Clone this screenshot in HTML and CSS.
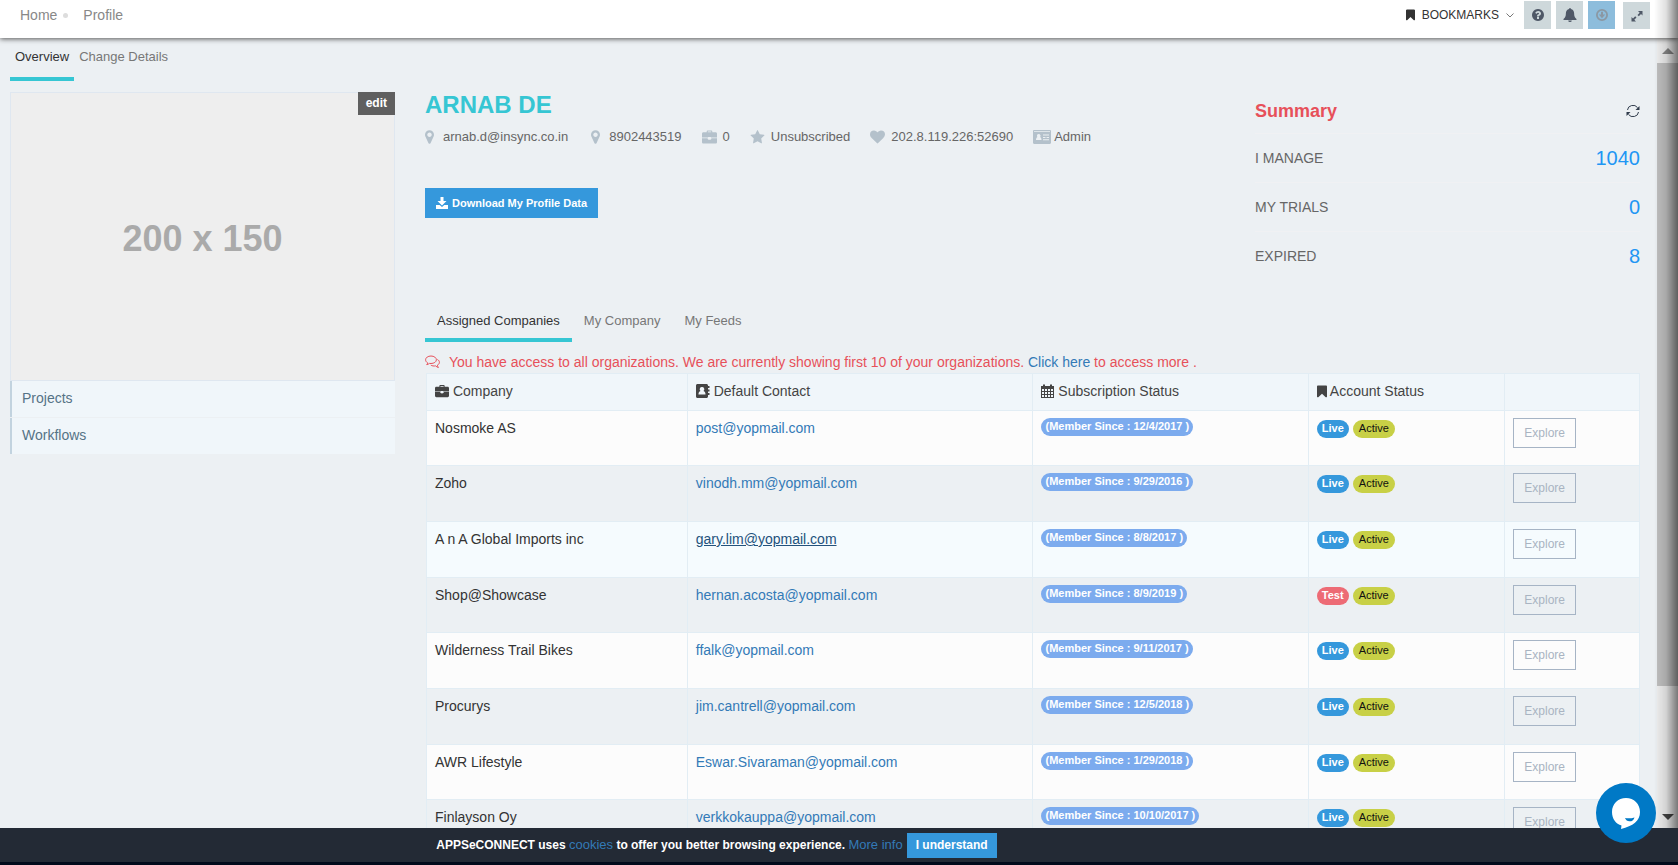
FILE: index.html
```html
<!DOCTYPE html>
<html lang="en">
<head>
<meta charset="utf-8">
<title>Profile</title>
<link rel="stylesheet" href="styles.css">
</head>
<body>
<svg class="sprite" aria-hidden="true">
  <symbol id="bookmark" viewBox="256 128 1280 1536"><path d="M1420 128q23 0 44 9 33 13 52.500 41t19.500 62v1289q0 34-19.500 62t-52.500 41q-19 8-44 8-48 0-83-32l-441-424-441 424q-36 33-83 33-23 0-44-9-33-13-52.500-41t-19.500-62v-1289q0-34 19.500-62t52.500-41q21-9 44-9h1048z"/></symbol>
  <symbol id="marker" viewBox="384 128 1024 1536"><path d="M1152 640q0-106-75-181t-181-75-181 75-75 181 75 181 181 75 181-75 75-181zm256 0q0 109-33 179l-364 774q-16 33-47.500 52t-67.500 19-67.500-19-46.500-52l-365-774q-33-70-33-179 0-212 150-362t362-150 362 150 150 362z"/></symbol>
  <symbol id="star" viewBox="0 64 1792 1600"><path d="M1728 647q0 22-26 48l-363 354 86 500q1 7 1 20 0 21-10.500 35.500t-30.500 14.500q-19 0-40-12l-449-236-449 236q-22 12-40 12-21 0-31.500-14.500t-10.500-35.500q0-6 2-20l86-500-364-354q-25-27-25-48 0-37 56-46l502-73 225-455q19-41 49-41t49 41l225 455 502 73q56 9 56 46z"/></symbol>
  <symbol id="heart" viewBox="0 128 1792 1536"><path d="M896 1664q-26 0-44-18l-624-602q-10-8-27.500-26t-55.500-65.500-68-97.500-53.500-121-23.500-138q0-220 127-344t351-124q62 0 126.500 21.500t120 58 95.500 68.500 76 68q36-36 76-68t95.500-68.500 120-58 126.500-21.500q224 0 351 124t127 344q0 221-229 450l-623 600q-18 18-44 18z"/></symbol>
  <symbol id="question" viewBox="128 128 1536 1536"><path d="M1024 1376v-192q0-14-9-23t-23-9h-192q-14 0-23 9t-9 23v192q0 14 9 23t23 9h192q14 0 23-9t9-23zm256-672q0-88-55.500-163t-138.500-116-170-41q-243 0-371 213-15 24 8 42l132 100q7 6 19 6 16 0 25-12 53-68 86-92 34-24 86-24 48 0 85.500 26t37.500 59q0 38-20 61t-68 45q-63 28-115.500 86.500t-52.500 125.500v36q0 14 9 23t23 9h192q14 0 23-9t9-23q0-19 21.500-49.500t54.500-49.500q32-18 49-28.500t46-35 44.500-48 28-60.500 12.500-81zm384 192q0 209-103 385.500t-279.500 279.500-385.500 103-385.500-103-279.500-279.500-103-385.500 103-385.500 279.500-279.500 385.500-103 385.500 103 279.500 279.500 103 385.500z"/></symbol>
  <symbol id="bell" viewBox="0 0 14 14"><path d="M7 0c.6 0 .9.400.9.900 2 .4 3.200 2 3.200 4.100 0 3.300.8 4.900 2.400 6.100.3.300.1.900-.4.900H.9c-.5 0-.7-.6-.4-.9C2.100 9.900 2.900 8.300 2.900 5c0-2.100 1.200-3.700 3.200-4.100C6.100.4 6.400 0 7 0zM5.200 12.500h3.600a1.800 1.500 0 0 1-3.600 0z"/></symbol>
  <symbol id="down" viewBox="1 1 12 12"><path fill-rule="evenodd" d="M7 1a6 6 0 1 0 0 12A6 6 0 0 0 7 1zm0 1.800a4.200 4.200 0 1 1 0 8.400 4.200 4.200 0 0 1 0-8.400zM6 3.800v2.700H3.800L7 10.200l3.200-3.700H8V3.800z"/></symbol>
  <symbol id="expand" viewBox="0 0 12 12"><path d="M7 1h4.500v4.500L10 4 7.800 6.200 6.500 5l2.200-2.300zM5 11.500H.5V7L2 8.500l2.200-2.200L5.500 7.500 3.300 9.800z"/></symbol>
  <symbol id="case" viewBox="0 0 16 14"><path fill-rule="evenodd" d="M5 2V1c0-.6.400-1 1-1h4c.6 0 1 .4 1 1v1h3.500c.8 0 1.500.7 1.500 1.500V7.600H9.500V7h-3v.6H0V3.500C0 2.700.7 2 1.500 2zm1.200 0h3.600v-.8H6.200zM0 8.200h6v.3c0 .8.700 1.300 2 1.300s2-.5 2-1.300v-.3h6v4.300c0 .8-.7 1.500-1.500 1.500h-13C.7 14 0 13.300 0 12.500z"/></symbol>
  <symbol id="idcard" viewBox="0 0 18 14"><path fill-rule="evenodd" d="M1.200 0h15.600c.7 0 1.200.5 1.200 1.200v11.600c0 .7-.5 1.200-1.200 1.200H1.200C.5 14 0 13.500 0 12.800V1.200C0 .5.500 0 1.200 0zM1 1.200v.9h16v-.9zM5.700 4a1.800 1.800 0 0 0-1.300 3C3.400 7.500 3 8.500 3 10h5.500c0-1.500-.5-2.500-1.400-3A1.800 1.800 0 0 0 5.700 4zM10 4.500v.9h6v-.9zM10 7v.9h2.500V7zm3.500 0v.9H16V7zM10 9.300v.9h6v-.9z"/></symbol>
  <symbol id="download" viewBox="0 0 12 12"><path d="M4.500 0h3v4h3L6 8.500 1.500 4h3zM0 8h3.700L6 10l2.300-2H12v4H0z"/></symbol>
  <symbol id="book" viewBox="0 0 14 14"><path fill-rule="evenodd" d="M1.500 0h9c.8 0 1.500.7 1.500 1.500V2h1.500v2H12v1.500h1.500v2H12V9h1.500v2H12v1.500c0 .8-.7 1.500-1.500 1.500h-9C.7 14 0 13.300 0 12.500v-11C0 .7.700 0 1.500 0zM6 3a2.200 2.200 0 0 0-1.500 3.900C3 7.300 2.500 8.500 2.500 10.500h7c0-2-.6-3.200-2-3.600A2.200 2.200 0 0 0 6 3z"/></symbol>
  <symbol id="calendar" viewBox="0 0 13 14"><path fill-rule="evenodd" d="M0 2h2V.5h2V2h5V.5h2V2h2v12H0zM1 5v2h2V5zm3 0v2h2V5zm3 0v2h2V5zm3 0v2h2V5zM1 8v2h2V8zm3 0v2h2V8zm3 0v2h2V8zm3 0v2h2V8zM1 11v2h2v-2zm3 0v2h2v-2zm3 0v2h2v-2zm3 0v2h2v-2z"/></symbol>
  <symbol id="chat" viewBox="0 0 15 14"><g fill="none" stroke="currentColor" stroke-linejoin="round"><path d="M6 1C3 1 .6 2.600.6 4.800c0 1.300.8 2.400 2.100 3.100-.1.700-.5 1.200-1 1.700 1-.1 2-.6 2.800-1.200.5.100 1 .1 1.500.1 3 0 5.400-1.600 5.400-3.700S9 1 6 1z"/><path d="M12.400 4.500c1.200.6 2 1.600 2 2.800s-.8 2.200-2 2.900c.2.900.5 1.600 1 2.300-1-.2-2-.8-2.700-1.600-2 .3-3.700 0-4.900-.8"/></g></symbol>
  <symbol id="refresh" viewBox="0 0 14 13"><path fill="none" stroke="currentColor" d="M1.500 5.500A5.500 5 0 0 1 11.500 3M12.500 7.500A5.500 5 0 0 1 2.500 10"/><path d="M13.500 1.500v4h-4zM.5 11.500v-4h4z"/></symbol>
</svg>

<header class="topbar">
  <nav class="crumbs" aria-label="Breadcrumb">
    <a href="#">Home</a><span class="dot"></span><a href="#">Profile</a>
  </nav>
  <div class="tools">
    <button class="bookmarks" type="button">
      <svg class="icon bm"><use href="#bookmark"/></svg>BOOKMARKS
      <svg class="chevron" viewBox="0 0 8 5"><path d="M.5.5 4 4 7.500.5"/></svg>
    </button>
    <button class="tool" type="button" aria-label="Help"><svg class="icon s12"><use href="#question"/></svg></button>
    <button class="tool" type="button" aria-label="Notifications"><svg class="icon s14"><use href="#bell"/></svg></button>
    <button class="tool blue" type="button" aria-label="Downloads"><svg class="icon s12"><use href="#down"/></svg></button>
    <button class="tool last" type="button" aria-label="Full screen"><svg class="icon s12"><use href="#expand"/></svg></button>
  </div>
</header>

<div class="body">
  <main class="content">
    <nav class="tabs page-tabs"><a class="on" href="#">Overview</a><a href="#">Change Details</a></nav>
    <div class="columns">
      <aside>
        <div class="photo"><span>200 x 150</span><button type="button">edit</button></div>
        <ul class="side">
          <li><a href="#">Projects</a></li>
          <li><a href="#">Workflows</a></li>
        </ul>
      </aside>
      <div>
        <div class="top">
          <section>
            <h1>ARNAB DE</h1>
            <ul class="facts">
              <li class="wide"><svg class="icon mk"><use href="#marker"/></svg>arnab.d@insync.co.in</li>
              <li class="wide"><svg class="icon mk"><use href="#marker"/></svg>8902443519</li>
              <li><svg class="icon s15"><use href="#case"/></svg>0</li>
              <li><svg class="icon s15"><use href="#star"/></svg>Unsubscribed</li>
              <li><svg class="icon s15"><use href="#heart"/></svg>202.8.119.226:52690</li>
              <li class="card"><svg class="icon s18"><use href="#idcard"/></svg>Admin</li>
            </ul>
            <button class="download" type="button"><svg class="icon s12"><use href="#download"/></svg>Download My Profile Data</button>
          </section>
          <section class="summary">
            <header><h2>Summary</h2><button type="button" aria-label="Refresh"><svg class="icon s14"><use href="#refresh"/></svg></button></header>
            <dl>
              <div><dt>I MANAGE</dt><dd>1040</dd></div>
              <div><dt>MY TRIALS</dt><dd>0</dd></div>
              <div><dt>EXPIRED</dt><dd>8</dd></div>
            </dl>
          </section>
        </div>
        <nav class="tabs list-tabs"><a class="on" href="#">Assigned Companies</a><a href="#">My Company</a><a href="#">My Feeds</a></nav>
        <p class="notice"><svg class="icon s15"><use href="#chat"/></svg><span>You have access to all organizations. We are currently showing first 10 of your organizations. <a href="#">Click here</a> to access more .</span></p>
        <div class="list">
        <table>
          <colgroup><col class="c1"><col class="c2"><col class="c3"><col class="c4"><col></colgroup>
          <thead>
            <tr>
              <th><svg class="icon s14"><use href="#case"/></svg> Company</th>
              <th><svg class="icon s14"><use href="#book"/></svg> Default Contact</th>
              <th><svg class="icon s14 cal"><use href="#calendar"/></svg> Subscription Status</th>
              <th><svg class="icon bm"><use href="#bookmark"/></svg>Account Status</th>
              <th></th>
            </tr>
          </thead>
          <tbody>
            <tr><td>Nosmoke AS</td><td><a href="#">post@yopmail.com</a></td><td><span class="badge since">(Member Since : 12/4/2017 )</span></td><td class="st"><span class="badge live">Live</span><span class="badge active">Active</span></td><td><button type="button">Explore</button></td></tr>
            <tr><td>Zoho</td><td><a href="#">vinodh.mm@yopmail.com</a></td><td><span class="badge since">(Member Since : 9/29/2016 )</span></td><td class="st"><span class="badge live">Live</span><span class="badge active">Active</span></td><td><button type="button">Explore</button></td></tr>
            <tr class="hover"><td>A n A Global Imports inc</td><td><a href="#">gary.lim@yopmail.com</a></td><td><span class="badge since">(Member Since : 8/8/2017 )</span></td><td class="st"><span class="badge live">Live</span><span class="badge active">Active</span></td><td><button type="button">Explore</button></td></tr>
            <tr><td>Shop@Showcase</td><td><a href="#">hernan.acosta@yopmail.com</a></td><td><span class="badge since">(Member Since : 8/9/2019 )</span></td><td class="st"><span class="badge test">Test</span><span class="badge active">Active</span></td><td><button type="button">Explore</button></td></tr>
            <tr><td>Wilderness Trail Bikes</td><td><a href="#">ffalk@yopmail.com</a></td><td><span class="badge since">(Member Since : 9/11/2017 )</span></td><td class="st"><span class="badge live">Live</span><span class="badge active">Active</span></td><td><button type="button">Explore</button></td></tr>
            <tr><td>Procurys</td><td><a href="#">jim.cantrell@yopmail.com</a></td><td><span class="badge since">(Member Since : 12/5/2018 )</span></td><td class="st"><span class="badge live">Live</span><span class="badge active">Active</span></td><td><button type="button">Explore</button></td></tr>
            <tr><td>AWR Lifestyle</td><td><a href="#">Eswar.Sivaraman@yopmail.com</a></td><td><span class="badge since">(Member Since : 1/29/2018 )</span></td><td class="st"><span class="badge live">Live</span><span class="badge active">Active</span></td><td><button type="button">Explore</button></td></tr>
            <tr><td>Finlayson Oy</td><td><a href="#">verkkokauppa@yopmail.com</a></td><td><span class="badge since">(Member Since : 10/10/2017 )</span></td><td class="st"><span class="badge live">Live</span><span class="badge active">Active</span></td><td><button type="button">Explore</button></td></tr>
          </tbody>
        </table>
        </div>
      </div>
    </div>
  </main>
  <div class="scrollbar" aria-hidden="true">
    <svg class="arrow up" viewBox="0 0 12 6"><path d="M0 6 6 0l6 6z"/></svg>
    <div class="track"><div class="thumb"></div></div>
    <svg class="arrow" viewBox="0 0 12 6"><path d="M0 0h12L6 6z"/></svg>
  </div>
</div>

<footer class="cookies">
  <p>APPSeCONNECT uses <a href="#">cookies</a> to offer you better browsing experience. <a href="#">More info</a></p>
  <button type="button">I understand</button>
</footer>
<div class="edge"></div>
<button class="chat" type="button" aria-label="Open chat">
  <svg viewBox="0 0 60 60"><path fill="#fff" d="M30 15c8 0 14 6 14 14 0 9-7 14-19 17l.5-3.500C20 41 16 36 16 29c0-8 6-14 14-14z"/><path fill="#0079c6" d="M29 35c3 .6 6.500.4 9.500-.6-.8 2.600-2.800 4-5 3.900-2.100 0-3.800-1.300-4.500-3.300z"/></svg>
</button>
</body>
</html>
```

FILE: styles.css
```css
* { box-sizing: border-box; }
body {
  margin: 0;
  height: 100vh;
  display: flex;
  flex-direction: column;
  overflow: hidden;
  background: #ecf0f3;
  color: #666;
  font: 14px/20px "Liberation Sans", Arial, sans-serif;
}
h1, h2, p, ul, dl, dd { margin: 0; padding: 0; }
ul { list-style: none; }
a { color: #337ab7; text-decoration: none; }
button { font: inherit; color: inherit; border: 0; padding: 0; background: none; cursor: pointer; }
.sprite { display: none; }
.icon { fill: currentColor; flex: none; }
.s12 { width: 12px; height: 12px; }
.s14 { width: 14px; height: 14px; }
.s15 { width: 15px; height: 14px; }
.s18 { width: 18px; height: 14px; }
.mk { width: 9px; height: 14px; }
.bm { width: 10px; height: 12px; }

.topbar {
  position: relative;
  height: 38px;
  flex: none;
  display: flex;
  justify-content: space-between;
  align-items: flex-start;
  padding: 0 28px 0 20px;
  background: #fff;
  box-shadow: 0 1px 5px #555;
}
.crumbs { display: flex; align-items: center; padding-top: 5px; }
.crumbs a { color: #888; }
.dot { width: 5px; height: 5px; border-radius: 50%; background: #ddd; margin: 0 15px 0 6px; }
.tools { display: flex; gap: 5px; padding-top: 1px; }
.bookmarks { display: flex; align-items: center; height: 28px; margin-right: 5px; color: #333; font-size: 12px; }
.bookmarks .bm { width: 9px; margin-right: 7px; }
.chevron { width: 8px; height: 5px; margin-left: 7px; fill: none; stroke: #777; }
.tool { display: grid; place-items: center; width: 27px; height: 28px; background: #ced8db; color: #4f5867; }
.blue { background: #8dbddc; color: #8b98a3; }
.last { margin: 1px 0 0 3px; height: 27px; }

.body { flex: 1; min-height: 0; display: flex; overflow: hidden; }
.content { flex: 1; padding: 0 17px 0 10px; }
.tabs { display: flex; font-size: 13px; }
.tabs a { color: #777; border-bottom: 4px solid transparent; }
.tabs .on { color: #333; border-color: #36c6d3; }
.page-tabs a { padding: 9px 5px 10px; }
.columns { display: grid; grid-template-columns: 385fr 1215fr; gap: 30px; padding-top: 11px; }

.photo {
  position: relative;
  aspect-ratio: 4 / 3;
  display: grid;
  place-items: center;
  padding-top: 6px;
  background: #eee;
  border: 1px solid #dfe7f0;
  color: #aaa;
  font: bold 36px/48px "Liberation Sans Narrow", "Liberation Sans", sans-serif;
}
.photo button {
  position: absolute;
  top: -1px;
  right: -1px;
  padding: 1px 8px 2px;
  background: #5f5f5f;
  color: #fff;
  font: bold 12px/20px "Liberation Sans", Arial, sans-serif;
}
.side { display: grid; gap: 1px; }
.side a { display: block; padding: 7px 10px 9px; border-left: 2px solid #c2d3df; background: #f0f6fa; color: #557386; }

.top { display: grid; grid-template-columns: 800fr 385fr; gap: 30px; height: 212px; }
h1 { color: #36c6d3; font-size: 24px; line-height: 26px; }
.facts { display: flex; gap: 20px; padding: 9px 0 41px; font-size: 13px; }
.facts li { display: flex; align-items: center; gap: 6px; }
.facts .wide { gap: 9px; margin-right: 3px; }
.facts .card { gap: 3px; }
.facts .icon { color: #b4c1cb; }
.facts .wide + li:not(.wide) { margin-left: -3px; }
.download { display: flex; align-items: center; gap: 4px; height: 30px; padding: 0 11px; background: #3598dc; color: #fff; font-size: 11px; font-weight: bold; }
.summary header { display: flex; justify-content: space-between; align-items: center; padding: 8px 0 11px; border-bottom: 1px solid #f0f1f3; }
h2 { color: #e7505a; font-size: 18px; line-height: 22px; }
.summary header button { display: flex; color: #2f3b4b; }
dl div { display: flex; justify-content: space-between; align-items: center; padding: 12px 0; border-bottom: 1px solid #f0f1f3; line-height: 24px; }
dl div:last-child { border: 0; }
dd { color: #2196f3; font-size: 20px; }

.list-tabs a { padding: 7px 12px; }
.notice { display: flex; align-items: center; gap: 9px; padding: 10px 0 1px; color: #e7505a; }

.list { padding-left: 1px; }
table { width: 100%; border-collapse: collapse; table-layout: fixed; color: #333; }
.c1 { width: 21.5%; }
.c2 { width: 28.5%; }
.c3 { width: 22.700%; }
.c4 { width: 16.200%; }
th, td { border: 1px solid #e2edf4; padding: 7px 8px; text-align: left; vertical-align: top; }
th { height: 37px; font-weight: normal; background: #f0f6fa; color: #444; }
th .icon { vertical-align: -2px; }
th .bm { height: 13px; margin-right: 3px; }
th .cal { width: 13px; }
td { height: 56px; }
tr:nth-child(3n+1) td { height: 55px; }
tbody tr:nth-child(odd) { background: #fcfcfc; }
tbody tr.hover { background: #f5fbfe; }
.hover a { color: #23527c; text-decoration: underline; }
.badge { display: inline-block; height: 18px; padding: 0 5px; border-radius: 9px; font-size: 11px; font-weight: bold; line-height: 17px; color: #fff; vertical-align: top; }
.since { padding: 0 4px; background: #7cabee; }
td.st { padding-top: 9px; }
.live { background: #3598dc; margin-right: 4px; }
.test { background: #ed6b75; margin-right: 4px; }
.active { padding: 0 6px; background: #c8d046; color: #111; font-weight: normal; }
td button { display: block; height: 30px; padding: 0 10px; border: 1px solid #a6b4c5; color: #a9b4c2; font-size: 12px; line-height: 28px; }

.scrollbar { width: 21px; flex: none; display: flex; flex-direction: column; align-items: center; padding: 10px 0 8px; background: #f1f1f1; }
.arrow { width: 12px; height: 6px; fill: #444; }
.up { fill: #888; }
.track { width: 100%; flex: 1; padding: 9px 0; }
.thumb { height: 84%; background: #c1c1c1; }

.cookies { position: relative; flex: none; display: flex; align-items: center; gap: 4px; height: 37px; padding-left: 26%; background: #232a35; border-bottom: 3px solid #010a1b; color: #fff; font-size: 12px; font-weight: bold; }
.cookies a { font-size: 13px; font-weight: normal; }
.cookies button { height: 25px; padding: 0 9px; background: #3598dc; }

.edge { position: fixed; top: 0; right: 0; bottom: 37px; width: 24px; pointer-events: none; background: linear-gradient(to right, transparent, rgba(0, 0, 0, .12) 50%, rgba(0, 0, 0, .5)); }
.chat { position: fixed; right: 22px; bottom: 22px; width: 60px; height: 60px; border-radius: 50%; background: #0079c6; }
.chat svg { display: block; }
```
